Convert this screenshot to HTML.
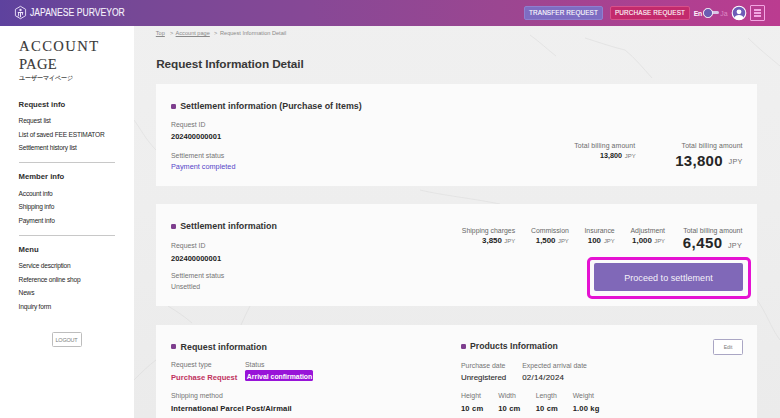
<!DOCTYPE html>
<html><head><meta charset="utf-8"><title>Request Information Detail</title>
<style>
html,body{margin:0;padding:0;width:780px;height:418px;overflow:hidden;}
body{position:relative;font-family:"Liberation Sans", sans-serif;}
</style></head><body>
<div style="position:absolute;left:0px;top:0px;width:780px;height:418px;background:linear-gradient(180deg,#f0f0f0 0%,#eeeeee 50%,#ebebeb 100%);"></div>
<svg style="position:absolute;left:0;top:0" width="780" height="418" viewBox="0 0 780 418">
<g fill="none" stroke="#d4d4d4" stroke-width="0.9" opacity="0.45">
<path d="M585 38 C598 42 612 47 625 50 C635 58 643 68 652 78"/>
<path d="M748 38 C758 48 768 56 780 66"/>
<path d="M530 35 C540 42 548 50 556 56"/>
<path d="M134 120 C140 128 146 140 156 150"/>
<path d="M134 380 C142 372 148 366 156 360"/>
<path d="M168 306 C176 311 184 316 192 323"/>
<path d="M250 306 C247 312 244 318 241 325"/>
<path d="M757 300 C765 310 772 330 780 340"/>
<path d="M420 190 C440 195 470 198 500 204"/>
</g></svg>
<div style="position:absolute;left:0px;top:26px;width:133.5px;height:392px;background:#ffffff;"></div>
<div style="position:absolute;left:0px;top:0px;width:780px;height:26px;background:linear-gradient(90deg,#5e429e 0%,#764896 17%,#874896 40%,#9b4691 64%,#bb3c90 100%);"></div>
<svg style="position:absolute;left:14px;top:5px" width="14" height="16" viewBox="0 0 14 16">
<path d="M6.5 1.3 L11.6 4.3 L11.6 10.7 L6.5 13.7 L1.4 10.7 L1.4 4.3 Z" fill="none" stroke="#efe6fa" stroke-width="0.9"/>
<circle cx="6.5" cy="5" r="1.2" fill="#efe6fa"/>
<path d="M3.8 7.5 H9.2" stroke="#efe6fa" stroke-width="1" fill="none"/>
<path d="M6.5 7 V12.2" stroke="#efe6fa" stroke-width="1.1" fill="none"/>
<path d="M4.5 8 V10.8 C4.5 11.3 4.1 11.5 3.6 11.3" stroke="#efe6fa" stroke-width="0.9" fill="none"/>
<path d="M8.5 8 V9.8" stroke="#efe6fa" stroke-width="0.9" fill="none"/>
</svg>
<div style='position:absolute;left:29.80px;top:8px;font-size:10px;line-height:10px;font-weight:400;color:#f6f2fc;white-space:nowrap;transform:scaleX(0.86);transform-origin:0 0;-webkit-text-stroke:0.1px #f6f2fc;'>JAPANESE PURVEYOR</div>
<div style="position:absolute;left:524px;top:6px;width:79px;height:14px;box-sizing:border-box;background:#7e6cc2;border:1px solid #8e80cf;border-radius:2px;"></div>
<div style='position:absolute;left:363.50px;width:400px;text-align:center;top:10px;font-size:6.4px;line-height:6.4px;font-weight:400;color:#ffffff;white-space:nowrap;letter-spacing:0.12px;-webkit-text-stroke:0.1px #fff;'>TRANSFER REQUEST</div>
<div style="position:absolute;left:610px;top:6px;width:80px;height:14px;box-sizing:border-box;background:#c32a6c;border:1px solid #d8508a;border-radius:2px;"></div>
<div style='position:absolute;left:450.00px;width:400px;text-align:center;top:10px;font-size:6.4px;line-height:6.4px;font-weight:400;color:#ffffff;white-space:nowrap;letter-spacing:0.12px;-webkit-text-stroke:0.1px #fff;'>PURCHASE REQUEST</div>
<div style='position:absolute;left:693.80px;top:11px;font-size:6.8px;line-height:6.8px;font-weight:700;color:#fff4fc;white-space:nowrap;letter-spacing:-0.35px;'>En</div>
<div style="position:absolute;left:709px;top:11.1px;width:10px;height:3.2px;background:#dac6e6;border-radius:1.6px;"></div>
<div style="position:absolute;left:703px;top:8.2px;width:9.5px;height:9.5px;box-sizing:border-box;background:#6a5cb2;border:1px solid #ffffff;border-radius:50%;"></div>
<div style='position:absolute;left:720.30px;top:10px;font-size:7px;line-height:7px;font-weight:400;color:rgba(255,200,240,0.55);white-space:nowrap;'>Ja</div>
<svg style="position:absolute;left:731px;top:5px" width="16" height="16" viewBox="0 0 16 16">
<circle cx="8" cy="8" r="6.8" fill="#6e5cb8" stroke="#ffffff" stroke-width="1.1"/>
<circle cx="8" cy="6.8" r="2.4" fill="#ffffff"/>
<path d="M3.2 12.9 C3.8 11 5.6 10 8 10 C10.4 10 12.2 11 12.8 12.9 C11.6 14.2 9.9 14.9 8 14.9 C6.1 14.9 4.4 14.2 3.2 12.9 Z" fill="#ffffff"/>
</svg>
<div style="position:absolute;left:750px;top:5px;width:15px;height:15.5px;box-sizing:border-box;border:1px solid #f2a6e2;border-radius:1px;"></div>
<div style="position:absolute;left:754px;top:9.1px;width:7.4px;height:1.6px;background:#f2a6e2;"></div>
<div style="position:absolute;left:754px;top:12.2px;width:7.4px;height:1.6px;background:#f2a6e2;"></div>
<div style="position:absolute;left:754px;top:15.4px;width:7.4px;height:1.6px;background:#f2a6e2;"></div>
<div style='position:absolute;left:19.00px;top:39px;font-size:14.6px;line-height:14.6px;font-weight:400;color:#3a3a3a;white-space:nowrap;font-family:"Liberation Serif", serif;letter-spacing:1.45px;-webkit-text-stroke:0.12px #3a3a3a;'>ACCOUNT</div>
<div style='position:absolute;left:19.00px;top:57px;font-size:14.6px;line-height:14.6px;font-weight:400;color:#3a3a3a;white-space:nowrap;font-family:"Liberation Serif", serif;letter-spacing:0.3px;-webkit-text-stroke:0.12px #3a3a3a;'>PAGE</div>
<div style='position:absolute;left:18.60px;top:75px;font-size:6px;line-height:6px;font-weight:400;color:#333;white-space:nowrap;-webkit-text-stroke:0.15px #333;'>ユーザーマイページ</div>
<div style='position:absolute;left:18.60px;top:101px;font-size:7.7px;line-height:7.7px;font-weight:700;color:#2e2e2e;white-space:nowrap;'>Request info</div>
<div style='position:absolute;left:18.60px;top:118px;font-size:6.6px;line-height:6.6px;font-weight:400;color:#262626;white-space:nowrap;letter-spacing:-0.2px;'>Request list</div>
<div style='position:absolute;left:18.60px;top:132px;font-size:6.6px;line-height:6.6px;font-weight:400;color:#262626;white-space:nowrap;letter-spacing:-0.2px;'>List of saved FEE ESTIMATOR</div>
<div style='position:absolute;left:18.60px;top:145px;font-size:6.6px;line-height:6.6px;font-weight:400;color:#262626;white-space:nowrap;letter-spacing:-0.2px;'>Settlement history list</div>
<div style="position:absolute;left:18.6px;top:162px;width:96px;height:1px;background:#c8c8c8;"></div>
<div style='position:absolute;left:18.60px;top:173px;font-size:7.7px;line-height:7.7px;font-weight:700;color:#2e2e2e;white-space:nowrap;'>Member info</div>
<div style='position:absolute;left:18.60px;top:191px;font-size:6.6px;line-height:6.6px;font-weight:400;color:#262626;white-space:nowrap;letter-spacing:-0.2px;'>Account info</div>
<div style='position:absolute;left:18.60px;top:204px;font-size:6.6px;line-height:6.6px;font-weight:400;color:#262626;white-space:nowrap;letter-spacing:-0.2px;'>Shipping info</div>
<div style='position:absolute;left:18.60px;top:218px;font-size:6.6px;line-height:6.6px;font-weight:400;color:#262626;white-space:nowrap;letter-spacing:-0.2px;'>Payment info</div>
<div style="position:absolute;left:18.6px;top:234.5px;width:96px;height:1px;background:#c8c8c8;"></div>
<div style='position:absolute;left:18.60px;top:246px;font-size:7.7px;line-height:7.7px;font-weight:700;color:#2e2e2e;white-space:nowrap;'>Menu</div>
<div style='position:absolute;left:18.60px;top:263px;font-size:6.6px;line-height:6.6px;font-weight:400;color:#262626;white-space:nowrap;letter-spacing:-0.2px;'>Service description</div>
<div style='position:absolute;left:18.60px;top:277px;font-size:6.6px;line-height:6.6px;font-weight:400;color:#262626;white-space:nowrap;letter-spacing:-0.2px;'>Reference online shop</div>
<div style='position:absolute;left:18.60px;top:290px;font-size:6.6px;line-height:6.6px;font-weight:400;color:#262626;white-space:nowrap;letter-spacing:-0.2px;'>News</div>
<div style='position:absolute;left:18.60px;top:304px;font-size:6.6px;line-height:6.6px;font-weight:400;color:#262626;white-space:nowrap;letter-spacing:-0.2px;'>Inquiry form</div>
<div style="position:absolute;left:52px;top:332px;width:30px;height:15px;box-sizing:border-box;border:1px solid #bdbdbd;border-radius:1.5px;background:#fff;"></div>
<div style='position:absolute;left:-133.50px;width:400px;text-align:center;top:338px;font-size:5.5px;line-height:5.5px;font-weight:400;color:#7e7e7e;white-space:nowrap;letter-spacing:-0.2px;'>LOGOUT</div>
<div style='position:absolute;left:155.80px;top:31px;font-size:5.6px;line-height:5.6px;font-weight:400;color:#8a8a8a;white-space:nowrap;'><u>Top</u></div>
<div style='position:absolute;left:170.00px;top:31px;font-size:5.6px;line-height:5.6px;font-weight:400;color:#8a8a8a;white-space:nowrap;'>&gt;</div>
<div style='position:absolute;left:175.60px;top:31px;font-size:5.6px;line-height:5.6px;font-weight:400;color:#8a8a8a;white-space:nowrap;'><u>Account page</u></div>
<div style='position:absolute;left:214.00px;top:31px;font-size:5.6px;line-height:5.6px;font-weight:400;color:#8a8a8a;white-space:nowrap;'>&gt;</div>
<div style='position:absolute;left:220.00px;top:31px;font-size:5.6px;line-height:5.6px;font-weight:400;color:#8a8a8a;white-space:nowrap;'>Request Information Detail</div>
<div style='position:absolute;left:156.20px;top:59px;font-size:11.8px;line-height:11.8px;font-weight:700;color:#383838;white-space:nowrap;letter-spacing:-0.1px;'>Request Information Detail</div>
<div style="position:absolute;left:156px;top:84px;width:601px;height:102px;background:#fbfbfb;"></div>
<div style="position:absolute;left:171px;top:103.6px;width:5px;height:5px;background:#7e3f8e;border-radius:1.2px;"></div>
<div style='position:absolute;left:180.20px;top:102px;font-size:8.9px;line-height:8.9px;font-weight:700;color:#333;white-space:nowrap;'>Settlement information (Purchase of Items)</div>
<div style='position:absolute;left:171.00px;top:122px;font-size:6.9px;line-height:6.9px;font-weight:400;color:#747474;white-space:nowrap;'>Request ID</div>
<div style='position:absolute;left:171.00px;top:133px;font-size:7.5px;line-height:7.5px;font-weight:700;color:#222;white-space:nowrap;'>202400000001</div>
<div style='position:absolute;left:171.00px;top:153px;font-size:6.9px;line-height:6.9px;font-weight:400;color:#747474;white-space:nowrap;'>Settlement status</div>
<div style='position:absolute;left:171.00px;top:163px;font-size:7.3px;line-height:7.3px;font-weight:400;color:#5646c8;white-space:nowrap;'>Payment completed</div>
<div style='position:absolute;right:144.80px;top:143px;font-size:6.9px;line-height:6.9px;font-weight:400;color:#6a6a6a;white-space:nowrap;letter-spacing:0.1px;'>Total billing amount</div>
<div style='position:absolute;right:158.00px;top:152px;font-size:7.2px;line-height:7.2px;font-weight:700;color:#222;white-space:nowrap;'>13,800</div>
<div style='position:absolute;right:144.40px;top:154px;font-size:5.9px;line-height:5.9px;font-weight:400;color:#777;white-space:nowrap;'>JPY</div>
<div style='position:absolute;right:37.40px;top:143px;font-size:6.9px;line-height:6.9px;font-weight:400;color:#6a6a6a;white-space:nowrap;letter-spacing:0.1px;'>Total billing amount</div>
<div style='position:absolute;right:57.20px;top:153px;font-size:15px;line-height:15px;font-weight:700;color:#262626;white-space:nowrap;letter-spacing:0.3px;'>13,800</div>
<div style='position:absolute;right:37.40px;top:158px;font-size:7.2px;line-height:7.2px;font-weight:400;color:#6e6e6e;white-space:nowrap;letter-spacing:0.3px;'>JPY</div>
<div style="position:absolute;left:156px;top:204px;width:601px;height:102px;background:#fbfbfb;"></div>
<div style="position:absolute;left:171px;top:223.5px;width:5px;height:5px;background:#7e3f8e;border-radius:1.2px;"></div>
<div style='position:absolute;left:180.20px;top:222px;font-size:8.9px;line-height:8.9px;font-weight:700;color:#333;white-space:nowrap;'>Settlement information</div>
<div style='position:absolute;left:171.00px;top:243px;font-size:6.9px;line-height:6.9px;font-weight:400;color:#747474;white-space:nowrap;'>Request ID</div>
<div style='position:absolute;left:171.00px;top:255px;font-size:7.5px;line-height:7.5px;font-weight:700;color:#222;white-space:nowrap;'>202400000001</div>
<div style='position:absolute;left:171.00px;top:273px;font-size:6.9px;line-height:6.9px;font-weight:400;color:#747474;white-space:nowrap;'>Settlement status</div>
<div style='position:absolute;left:171.00px;top:284px;font-size:6.9px;line-height:6.9px;font-weight:400;color:#747474;white-space:nowrap;'>Unsettled</div>
<div style='position:absolute;right:264.90px;top:228px;font-size:6.9px;line-height:6.9px;font-weight:400;color:#666;white-space:nowrap;'>Shipping charges</div>
<div style='position:absolute;right:278.20px;top:237px;font-size:7.9px;line-height:7.9px;font-weight:700;color:#222;white-space:nowrap;'>3,850</div>
<div style='position:absolute;right:264.90px;top:239px;font-size:5.9px;line-height:5.9px;font-weight:400;color:#777;white-space:nowrap;'>JPY</div>
<div style='position:absolute;right:211.20px;top:228px;font-size:6.9px;line-height:6.9px;font-weight:400;color:#666;white-space:nowrap;'>Commission</div>
<div style='position:absolute;right:224.50px;top:237px;font-size:7.9px;line-height:7.9px;font-weight:700;color:#222;white-space:nowrap;'>1,500</div>
<div style='position:absolute;right:211.20px;top:239px;font-size:5.9px;line-height:5.9px;font-weight:400;color:#777;white-space:nowrap;'>JPY</div>
<div style='position:absolute;right:165.30px;top:228px;font-size:6.9px;line-height:6.9px;font-weight:400;color:#666;white-space:nowrap;'>Insurance</div>
<div style='position:absolute;right:179.00px;top:237px;font-size:7.9px;line-height:7.9px;font-weight:700;color:#222;white-space:nowrap;'>100</div>
<div style='position:absolute;right:165.30px;top:239px;font-size:5.9px;line-height:5.9px;font-weight:400;color:#777;white-space:nowrap;'>JPY</div>
<div style='position:absolute;right:115.00px;top:228px;font-size:6.9px;line-height:6.9px;font-weight:400;color:#666;white-space:nowrap;'>Adjustment</div>
<div style='position:absolute;right:128.20px;top:237px;font-size:7.9px;line-height:7.9px;font-weight:700;color:#222;white-space:nowrap;'>1,000</div>
<div style='position:absolute;right:115.00px;top:239px;font-size:5.9px;line-height:5.9px;font-weight:400;color:#777;white-space:nowrap;'>JPY</div>
<div style='position:absolute;right:37.70px;top:228px;font-size:6.9px;line-height:6.9px;font-weight:400;color:#666;white-space:nowrap;'>Total billing amount</div>
<div style='position:absolute;right:57.30px;top:235px;font-size:15px;line-height:15px;font-weight:700;color:#262626;white-space:nowrap;letter-spacing:0.5px;'>6,450</div>
<div style='position:absolute;right:38.00px;top:242px;font-size:7.2px;line-height:7.2px;font-weight:400;color:#6e6e6e;white-space:nowrap;letter-spacing:0.3px;'>JPY</div>
<div style="position:absolute;left:586.5px;top:256.5px;width:164px;height:42px;box-sizing:border-box;border:3px solid #e512d2;border-radius:5px;"></div>
<div style="position:absolute;left:594px;top:263px;width:149px;height:28px;background:#8068b8;border-radius:2px;"></div>
<div style='position:absolute;left:468.50px;width:400px;text-align:center;top:274px;font-size:9px;line-height:9px;font-weight:400;color:#f4f2fa;white-space:nowrap;letter-spacing:0.05px;'>Proceed to settlement</div>
<div style="position:absolute;left:156px;top:325px;width:601px;height:93px;background:#fbfbfb;"></div>
<div style="position:absolute;left:171px;top:343.5px;width:5px;height:5px;background:#7e3f8e;border-radius:1.2px;"></div>
<div style='position:absolute;left:180.60px;top:343px;font-size:8.9px;line-height:8.9px;font-weight:700;color:#333;white-space:nowrap;'>Request information</div>
<div style='position:absolute;left:171.00px;top:362px;font-size:6.9px;line-height:6.9px;font-weight:400;color:#747474;white-space:nowrap;'>Request type</div>
<div style='position:absolute;left:244.90px;top:362px;font-size:6.9px;line-height:6.9px;font-weight:400;color:#747474;white-space:nowrap;'>Status</div>
<div style='position:absolute;left:171.00px;top:374px;font-size:7.6px;line-height:7.6px;font-weight:700;color:#c0325e;white-space:nowrap;'>Purchase Request</div>
<div style="position:absolute;left:245px;top:370.4px;width:68px;height:10.6px;background:#9814d8;border-radius:1.5px;"></div>
<div style='position:absolute;left:246.80px;top:374px;font-size:6.9px;line-height:6.9px;font-weight:700;color:#ffffff;white-space:nowrap;'>Arrival confirmation</div>
<div style='position:absolute;left:171.00px;top:393px;font-size:6.9px;line-height:6.9px;font-weight:400;color:#747474;white-space:nowrap;'>Shipping method</div>
<div style='position:absolute;left:171.00px;top:405px;font-size:7.6px;line-height:7.6px;font-weight:700;color:#222;white-space:nowrap;letter-spacing:0.12px;'>International Parcel Post/Airmail</div>
<div style="position:absolute;left:461px;top:343.6px;width:5px;height:5px;background:#7e3f8e;border-radius:1.2px;"></div>
<div style='position:absolute;left:470.00px;top:342px;font-size:8.7px;line-height:8.7px;font-weight:700;color:#333;white-space:nowrap;'>Products Information</div>
<div style='position:absolute;left:461.00px;top:363px;font-size:6.9px;line-height:6.9px;font-weight:400;color:#747474;white-space:nowrap;'>Purchase date</div>
<div style='position:absolute;left:522.20px;top:363px;font-size:6.9px;line-height:6.9px;font-weight:400;color:#747474;white-space:nowrap;'>Expected arrival date</div>
<div style='position:absolute;left:461.00px;top:374px;font-size:7.9px;line-height:7.9px;font-weight:400;color:#2a2a2a;white-space:nowrap;-webkit-text-stroke:0.1px #2a2a2a;'>Unregistered</div>
<div style='position:absolute;left:522.20px;top:374px;font-size:7.9px;line-height:7.9px;font-weight:400;color:#2a2a2a;white-space:nowrap;letter-spacing:0.25px;-webkit-text-stroke:0.1px #2a2a2a;'>02/14/2024</div>
<div style='position:absolute;left:461.00px;top:393px;font-size:6.9px;line-height:6.9px;font-weight:400;color:#747474;white-space:nowrap;'>Height</div>
<div style='position:absolute;left:461.00px;top:405px;font-size:7.6px;line-height:7.6px;font-weight:700;color:#222;white-space:nowrap;letter-spacing:0.15px;'>10 cm</div>
<div style='position:absolute;left:498.20px;top:393px;font-size:6.9px;line-height:6.9px;font-weight:400;color:#747474;white-space:nowrap;'>Width</div>
<div style='position:absolute;left:498.20px;top:405px;font-size:7.6px;line-height:7.6px;font-weight:700;color:#222;white-space:nowrap;letter-spacing:0.15px;'>10 cm</div>
<div style='position:absolute;left:535.70px;top:393px;font-size:6.9px;line-height:6.9px;font-weight:400;color:#747474;white-space:nowrap;'>Length</div>
<div style='position:absolute;left:535.70px;top:405px;font-size:7.6px;line-height:7.6px;font-weight:700;color:#222;white-space:nowrap;letter-spacing:0.15px;'>10 cm</div>
<div style='position:absolute;left:572.70px;top:393px;font-size:6.9px;line-height:6.9px;font-weight:400;color:#747474;white-space:nowrap;'>Weight</div>
<div style='position:absolute;left:572.70px;top:405px;font-size:7.6px;line-height:7.6px;font-weight:700;color:#222;white-space:nowrap;letter-spacing:0.15px;'>1.00 kg</div>
<div style="position:absolute;left:713px;top:339px;width:30px;height:15.5px;box-sizing:border-box;border:1px solid #aaa6c4;border-radius:1.5px;background:#fff;"></div>
<div style='position:absolute;left:528.00px;width:400px;text-align:center;top:345px;font-size:5px;line-height:5px;font-weight:400;color:#777;white-space:nowrap;'>Edit</div>
</body></html>
